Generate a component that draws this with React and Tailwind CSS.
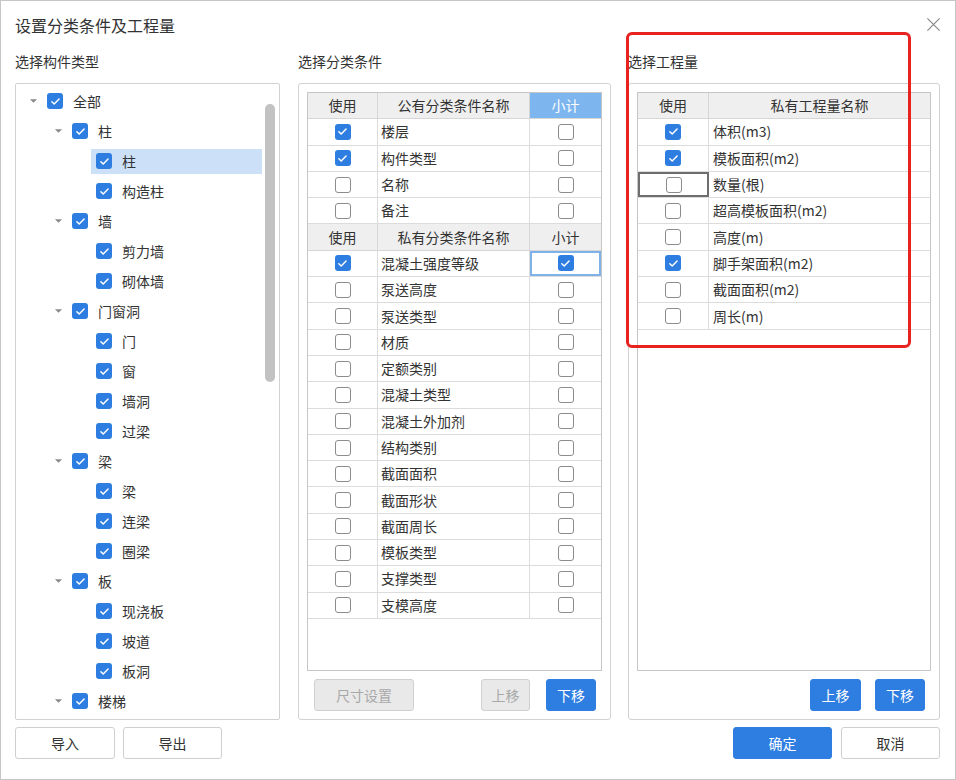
import React from "react";

const Cb = ({ checked }) =>
  checked ? (
    <span className="w-4 h-4 rounded-[3px] bg-[#2e7de0] flex items-center justify-center shrink-0">
      <svg viewBox="0 0 16 16" className="w-[13px] h-[13px]">
        <path d="M3.5 8.2l2.9 2.9 6-6.2" stroke="white" strokeWidth="1.8" fill="none" strokeLinecap="round" strokeLinejoin="round" />
      </svg>
    </span>
  ) : (
    <span className="w-4 h-4 rounded-[3px] border border-[#8c8c8c] bg-white shrink-0" />
  );

const Arrow = () => (
  <svg viewBox="0 0 10 6" className="w-[9px] h-[6px]">
    <path d="M1 1h8L5 5z" fill="#8a8a8a" />
  </svg>
);

const tree = [
  ["全部", 0],
  ["柱", 1],
  ["柱", 2, true],
  ["构造柱", 2],
  ["墙", 1],
  ["剪力墙", 2],
  ["砌体墙", 2],
  ["门窗洞", 1],
  ["门", 2],
  ["窗", 2],
  ["墙洞", 2],
  ["过梁", 2],
  ["梁", 1],
  ["梁", 2],
  ["连梁", 2],
  ["圈梁", 2],
  ["板", 1],
  ["现浇板", 2],
  ["坡道", 2],
  ["板洞", 2],
  ["楼梯", 1],
];

const pubRows = [
  ["楼层", true],
  ["构件类型", true],
  ["名称", false],
  ["备注", false],
];
const privRows = [
  ["混凝土强度等级", true, true],
  ["泵送高度"],
  ["泵送类型"],
  ["材质"],
  ["定额类别"],
  ["混凝土类型"],
  ["混凝土外加剂"],
  ["结构类别"],
  ["截面面积"],
  ["截面形状"],
  ["截面周长"],
  ["模板类型"],
  ["支撑类型"],
  ["支模高度"],
];
const qtyRows = [
  ["体积(m3)", true],
  ["模板面积(m2)", true],
  ["数量(根)", false, true],
  ["超高模板面积(m2)", false],
  ["高度(m)", false],
  ["脚手架面积(m2)", true],
  ["截面面积(m2)", false],
  ["周长(m)", false],
];

function TreeRow({ label, level, selected }) {
  const pl = level === 0 ? "pl-[12px]" : level === 1 ? "pl-[37px]" : "pl-[61px]";
  return (
    <div className={`h-[30px] flex items-center ${pl}`}>
      <span className="w-[10px] mr-[9px] flex items-center justify-center">{level < 2 ? <Arrow /> : null}</span>
      <div className={`flex-1 h-[25px] flex items-center ${level === 2 ? "-ml-[5px] pl-[5px]" : ""} ${selected ? "bg-[#cce1f8]" : ""}`}>
        <Cb checked />
        <span className="ml-[10px] text-[14px] text-[#333]">{label}</span>
      </div>
    </div>
  );
}

function HeadRow({ name, blue }) {
  return (
    <div className="flex h-[26.3px] bg-[#efefef] border-b border-[#d6d6d6] text-[14px] text-[#333]">
      <div className="w-[70px] border-r border-[#d6d6d6] flex items-center justify-center">使用</div>
      <div className="w-[152px] border-r border-[#d6d6d6] flex items-center justify-center">{name}</div>
      <div className={`flex-1 flex items-center justify-center ${blue ? "bg-[#7db6ef] text-white" : ""}`}>小计</div>
    </div>
  );
}

function CondRow({ name, use, sub }) {
  return (
    <div className="flex h-[26.3px] border-b border-[#dcdcdc] text-[14px] text-[#333]">
      <div className="w-[70px] border-r border-[#dcdcdc] flex items-center justify-center">
        <Cb checked={use} />
      </div>
      <div className="w-[152px] border-r border-[#dcdcdc] flex items-center pl-[3px]">{name}</div>
      <div className={`flex-1 flex items-center justify-center ${sub ? "border-2 border-[#80b2ea]" : ""}`}>
        <Cb checked={sub} />
      </div>
    </div>
  );
}

function QtyRow({ name, use, focus }) {
  return (
    <div className="flex h-[26.3px] border-b border-[#dcdcdc] text-[14px] text-[#333]">
      <div className={`w-[71px] flex items-center justify-center ${focus ? "border-2 border-[#6e6e6e]" : "border-r border-[#dcdcdc]"}`}>
        <Cb checked={use} />
      </div>
      <div className="flex-1 flex items-center pl-[4px]">{name}</div>
    </div>
  );
}

const Btn = ({ children, kind, className = "" }) => {
  const k =
    kind === "primary"
      ? "bg-[#2e7de0] text-white border-[#2e7de0]"
      : kind === "disabled"
      ? "bg-[#e9e9e9] text-[#a8a8a8] border-[#d0d0d0]"
      : "bg-white text-[#333] border-[#cfcfcf]";
  return (
    <div className={`h-[32px] rounded-[3px] border flex items-center justify-center text-[14px] ${k} ${className}`}>
      {children}
    </div>
  );
};

export default function App() {
  return (
    <div
      className="w-[956px] h-[780px] bg-white border border-[#c6c6c6] relative overflow-hidden"
      style={{ fontFamily: '"Noto Sans CJK SC", "Noto Sans", sans-serif' }}
    >
      {/* header */}
      <div className="h-[47px] flex items-center justify-between pl-[14px] pr-[14px]">
        <span className="text-[16px] text-[#333]">设置分类条件及工程量</span>
        <svg viewBox="0 0 16 16" className="w-[15px] h-[15px]">
          <path d="M1.5 1.5l13 13M14.5 1.5l-13 13" stroke="#8a8a8a" strokeWidth="1.3" />
        </svg>
      </div>

      <div className="flex px-[14px]">
        {/* left column */}
        <div className="w-[265px] flex flex-col mr-[18px]">
          <div className="h-[26px] flex items-center text-[14px] text-[#333]">选择构件类型</div>
          <div className="mt-[9px] h-[637px] border border-[#d2d2d2] rounded-[2px] relative overflow-hidden">
            <div className="pt-[2px] pr-[17px]">
              {tree.map(([l, lv, s], i) => (
                <TreeRow key={i} label={l} level={lv} selected={s} />
              ))}
            </div>
            <div className="absolute right-[4px] top-[20px] w-[10px] h-[278px] rounded-full bg-[#c2c2c2]" />
          </div>
          <div className="mt-[7px] flex gap-[8px]">
            <Btn className="w-[100px]">导入</Btn>
            <Btn className="w-[99px]">导出</Btn>
          </div>
        </div>

        {/* middle column */}
        <div className="w-[313px] flex flex-col mr-[17px]">
          <div className="h-[26px] flex items-center text-[14px] text-[#333]">选择分类条件</div>
          <div className="mt-[9px] h-[637px] border border-[#d2d2d2] rounded-[3px] p-[8px] flex flex-col">
            <div className="h-[579px] border border-[#c6c6c6]">
              <HeadRow name="公有分类条件名称" blue />
              {pubRows.map(([n, u], i) => (
                <CondRow key={i} name={n} use={u} />
              ))}
              <HeadRow name="私有分类条件名称" />
              {privRows.map(([n, u, s], i) => (
                <CondRow key={i} name={n} use={u} sub={s} />
              ))}
            </div>
            <div className="mt-[8px] flex items-center pl-[7px] pr-[6px]">
              <Btn kind="disabled" className="w-[100px]">尺寸设置</Btn>
              <div className="flex-1" />
              <Btn kind="disabled" className="w-[49px]">上移</Btn>
              <Btn kind="primary" className="w-[50px] ml-[16px]">下移</Btn>
            </div>
          </div>
        </div>

        {/* right column */}
        <div className="w-[312px] flex flex-col">
          <div className="h-[26px] flex items-center text-[14px] text-[#333]">选择工程量</div>
          <div className="mt-[9px] h-[637px] border border-[#d2d2d2] rounded-[3px] p-[8px] flex flex-col">
            <div className="h-[579px] border border-[#c6c6c6]">
              <div className="flex h-[26.3px] bg-[#efefef] border-b border-[#d6d6d6] text-[14px] text-[#333]">
                <div className="w-[71px] border-r border-[#d6d6d6] flex items-center justify-center">使用</div>
                <div className="flex-1 flex items-center justify-center">私有工程量名称</div>
              </div>
              {qtyRows.map(([n, u, f], i) => (
                <QtyRow key={i} name={n} use={u} focus={f} />
              ))}
            </div>
            <div className="mt-[8px] flex items-center justify-end pr-[6px]">
              <Btn kind="primary" className="w-[51px]">上移</Btn>
              <Btn kind="primary" className="w-[50px] ml-[14px]">下移</Btn>
            </div>
          </div>
          <div className="mt-[7px] flex justify-end gap-[9px]">
            <Btn kind="primary" className="w-[99px]">确定</Btn>
            <Btn className="w-[99px]">取消</Btn>
          </div>
        </div>
      </div>

      {/* red annotation rectangle */}
      <div className="absolute left-[625px] top-[31px] w-[285px] h-[316px] border-[3px] border-[#e8231f] rounded-[6px] pointer-events-none" />
    </div>
  );
}
